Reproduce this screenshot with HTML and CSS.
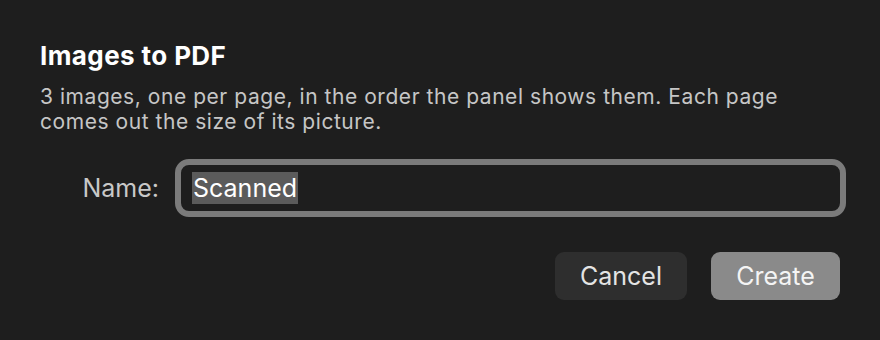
FILE: index.html
```html
<!DOCTYPE html>
<html>
<head>
<meta charset="utf-8">
<link rel="stylesheet" href="styles.css">
</head>
<body>
<div class="dialog">
  <h1 class="title">Images to PDF</h1>
  <p class="desc">3 images, one per page, in the order the panel shows them. Each page comes out the size of its picture.</p>
  <div class="field-row">
    <label class="label">Name:</label>
    <div class="input"><span class="sel">Scanned</span></div>
  </div>
  <div class="actions">
    <button class="btn cancel">Cancel</button>
    <button class="btn create">Create</button>
  </div>
</div>
</body>
</html>
```
FILE: styles.css
```css
html, body {
  margin: 0;
  padding: 0;
  background: #1e1e1e;
  width: 880px;
  height: 340px;
  overflow: hidden;
}
.dialog {
  padding: 40px 34px 0 40px;
  font-family: Inter, "Noto Sans", sans-serif;
  color: #c9c9c9;
}
.title {
  margin: 0;
  font-size: 26px;
  font-weight: 700;
  color: #ffffff;
  line-height: 32px;
  letter-spacing: 0.4px;
}
.desc {
  margin: 12px 0 0 0;
  font-size: 21px;
  line-height: 25px;
  letter-spacing: 0.55px;
  width: 770px;
  color: #c6c6c6;
}
.field-row {
  display: flex;
  align-items: center;
  gap: 16px;
  margin-top: 25px;
}
.label {
  width: 119px;
  text-align: right;
  font-size: 25px;
  color: #c8c8c8;
}
.input {
  flex: 1;
  height: 58px;
  box-sizing: border-box;
  border: 6px solid #7b7b7b;
  border-radius: 14px;
  display: flex;
  align-items: center;
  padding-left: 11px;
}
.sel {
  background: #5b5b5b;
  color: #ffffff;
  font-size: 25px;
  line-height: 32px;
  padding: 0 1px;
}
.actions {
  display: flex;
  justify-content: flex-end;
  gap: 24px;
  margin-top: 35px;
  margin-right: 6px;
}
.btn {
  height: 48px;
  border: none;
  border-radius: 9px;
  font-family: Inter, "Noto Sans", sans-serif;
  font-size: 25px;
  color: #e4e4e4;
  padding: 0;
}
.cancel {
  width: 132px;
  background: #2e2e2e;
}
.create {
  width: 129px;
  background: #8a8a8a;
  color: #f4f4f4;
}
```
